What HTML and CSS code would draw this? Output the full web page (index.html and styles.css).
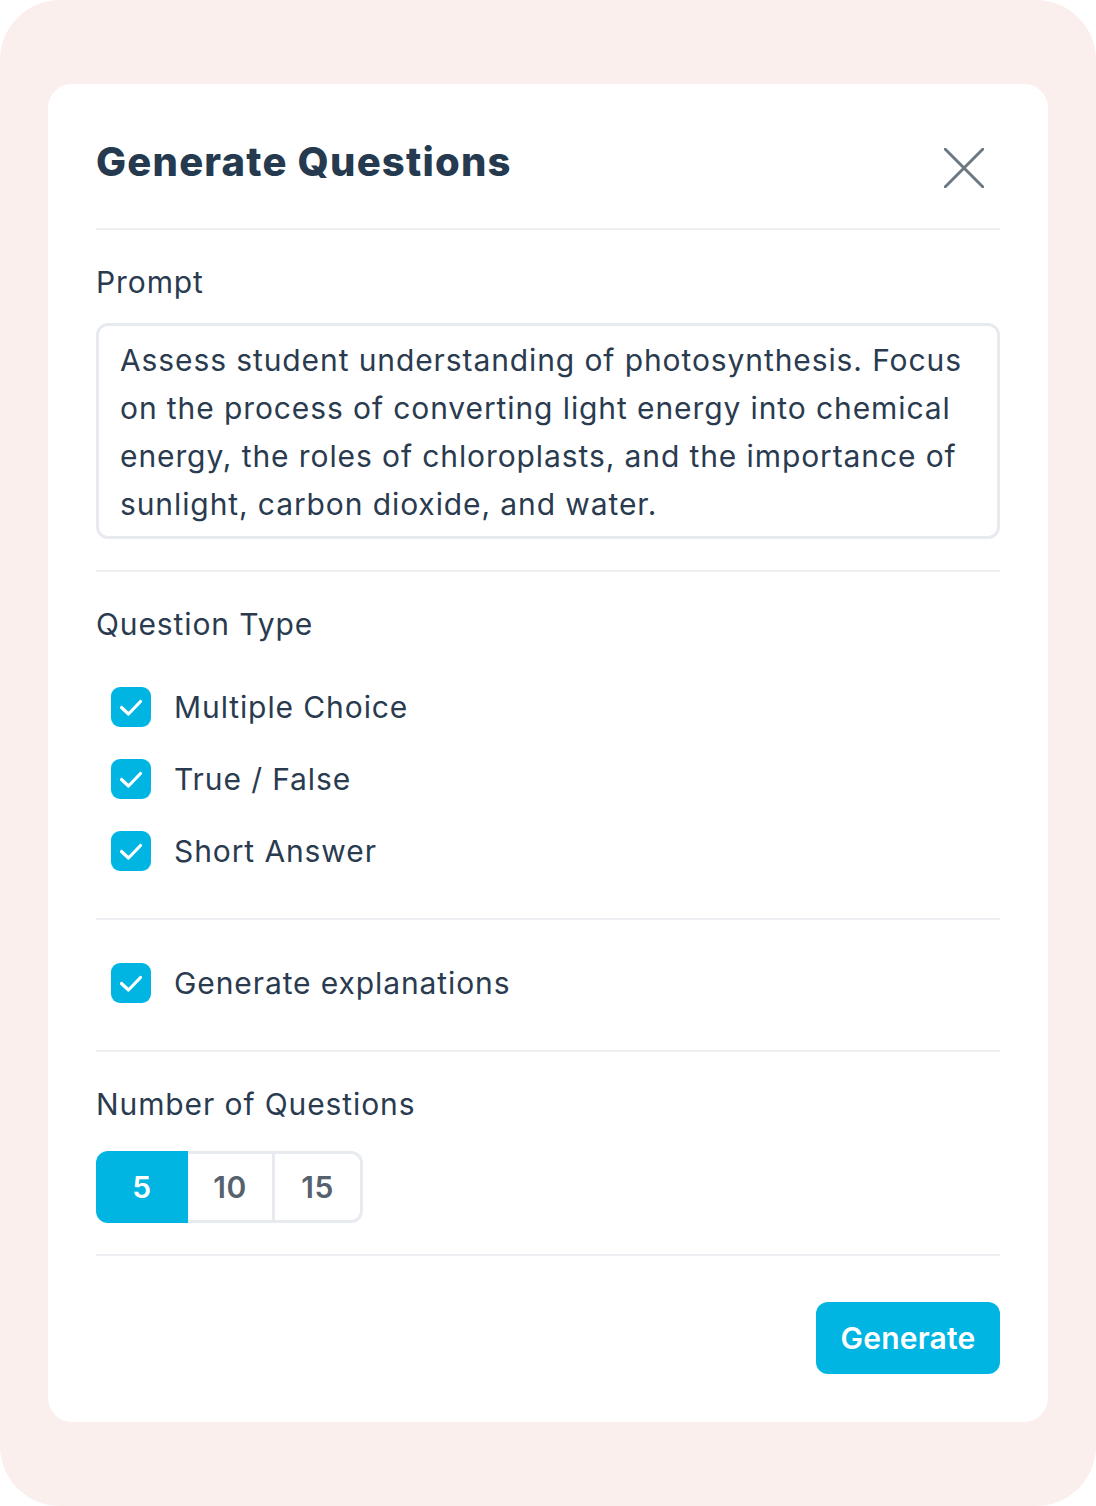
FILE: index.html
```html
<!DOCTYPE html>
<html lang="en">
<head>
  <meta charset="UTF-8">
  <title>Generate Questions</title>
  <link rel="stylesheet" href="styles.css">
</head>
<body>

<div class="page">
  <div class="card">

    <div class="card-header">
      <h1 class="title">Generate Questions</h1>
      <button class="close-btn" aria-label="Close">
        <svg width="40" height="40" viewBox="0 0 40 40">
          <path d="M1 1 L39 39 M39 1 L1 39" stroke="#6e7883" stroke-width="3" stroke-linecap="round" fill="none"/>
        </svg>
      </button>
    </div>

    <div class="section">
      <div class="label">Prompt</div>
      <div class="prompt-box">Assess student understanding of photosynthesis. Focus on the process of converting light energy into chemical energy, the roles of chloroplasts, and the importance of sunlight, carbon dioxide, and water.</div>
    </div>

    <div class="section">
      <div class="label">Question Type</div>
      <div class="check-list">
        <label class="check-row">
          <span class="checkbox"><svg width="40" height="40" viewBox="0 0 40 40"><path d="M10.5 20.5 L17.5 27 L29.5 14.5" stroke="#fff" stroke-width="3.2" stroke-linecap="round" stroke-linejoin="round" fill="none"/></svg></span>
          Multiple Choice
        </label>
        <label class="check-row">
          <span class="checkbox"><svg width="40" height="40" viewBox="0 0 40 40"><path d="M10.5 20.5 L17.5 27 L29.5 14.5" stroke="#fff" stroke-width="3.2" stroke-linecap="round" stroke-linejoin="round" fill="none"/></svg></span>
          True / False
        </label>
        <label class="check-row">
          <span class="checkbox"><svg width="40" height="40" viewBox="0 0 40 40"><path d="M10.5 20.5 L17.5 27 L29.5 14.5" stroke="#fff" stroke-width="3.2" stroke-linecap="round" stroke-linejoin="round" fill="none"/></svg></span>
          Short Answer
        </label>
      </div>
    </div>

    <div class="section section-explain">
      <label class="check-row">
        <span class="checkbox"><svg width="40" height="40" viewBox="0 0 40 40"><path d="M10.5 20.5 L17.5 27 L29.5 14.5" stroke="#fff" stroke-width="3.2" stroke-linecap="round" stroke-linejoin="round" fill="none"/></svg></span>
        Generate explanations
      </label>
    </div>

    <div class="section">
      <div class="label">Number of Questions</div>
      <div class="segmented">
        <button class="seg seg-active">5</button>
        <button class="seg seg-mid">10</button>
        <button class="seg seg-last">15</button>
      </div>
    </div>

    <div class="card-footer">
      <button class="generate-btn">Generate</button>
    </div>

  </div>
</div>

</body>
</html>
```

FILE: styles.css
```css
body {
  margin: 0;
  background: #ffffff;
  font-family: Inter, "Liberation Sans", sans-serif;
  color: #2a3b4f;
  letter-spacing: 0.9px;
}

.page {
  width: 1096px;
  height: 1506px;
  box-sizing: border-box;
  padding: 84px 48px;
  background: #fbefed;
  border-radius: 60px;
}

.card {
  background: #ffffff;
  border-radius: 24px;
  padding: 0 48px 48px;
  height: 100%;
  box-sizing: border-box;
}

.card-header {
  display: flex;
  align-items: flex-start;
  justify-content: space-between;
  padding: 54px 0 40px;
  border-bottom: 2px solid #eceef1;
}

.title {
  margin: 0;
  font-family: Inter, sans-serif;
  font-size: 40px;
  line-height: 48px;
  font-weight: 800;
  color: #253a4f;
  letter-spacing: 1.2px;
}

.close-btn {
  background: none;
  border: none;
  padding: 0;
  margin: 10px 16px 0 0;
  width: 40px;
  height: 40px;
  cursor: pointer;
}

.section {
  padding: 34px 0 31px;
  border-bottom: 2px solid #eceef1;
}

.label {
  font-size: 30px;
  line-height: 36px;
  margin-bottom: 23px;
}

.prompt-box {
  border: 3px solid #e7ebef;
  border-radius: 12px;
  padding: 10px 20px 8px 21px;
  font-size: 30px;
  line-height: 48px;
}

/* Checkboxes */
.check-list {
  display: flex;
  flex-direction: column;
  gap: 32px;
  padding: 22px 0 16px;
}

.check-row {
  display: flex;
  align-items: center;
  gap: 23px;
  padding-left: 15px;
  font-size: 30px;
  line-height: 40px;
}

.checkbox {
  width: 40px;
  height: 40px;
  border-radius: 9px;
  background: #00b5e2;
  display: flex;
  flex-shrink: 0;
}

.section-explain {
  padding: 43px 0 47px;
}

/* Number of questions */
.segmented {
  display: inline-flex;
  margin-top: 6px;
}

.seg {
  box-sizing: border-box;
  height: 72px;
  padding: 0;
  background: #fff;
  border: 3px solid #e7ebef;
  border-left: none;
  font-family: Inter, sans-serif;
  font-size: 30px;
  font-weight: 600;
  letter-spacing: 0.5px;
  color: #56616e;
}

.seg-active {
  width: 92px;
  border: none;
  border-radius: 12px 0 0 12px;
  background: #00b5e2;
  color: #fff;
}

.seg-mid {
  width: 87px;
}

.seg-last {
  width: 88px;
  border-radius: 0 12px 12px 0;
}

.card-footer {
  display: flex;
  justify-content: flex-end;
  padding-top: 46px;
}

.generate-btn {
  background: #00b5e2;
  color: #fff;
  border: none;
  border-radius: 12px;
  font-family: Inter, sans-serif;
  font-size: 30px;
  font-weight: 600;
  letter-spacing: 0.2px;
  width: 184px;
  height: 72px;
  padding: 0;
}
```
